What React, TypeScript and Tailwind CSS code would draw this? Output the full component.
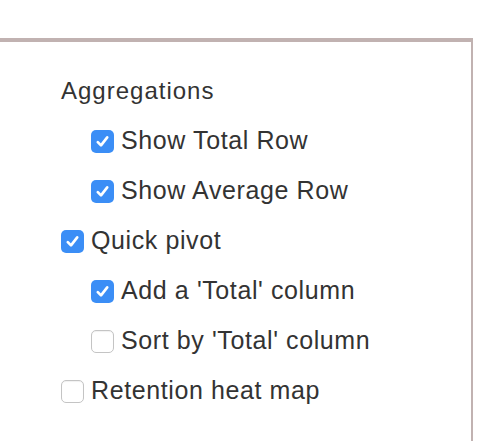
import React from "react";

type Item = { label: string; checked?: boolean; indent?: boolean; header?: boolean };

const items: Item[] = [
  { label: "Aggregations", header: true },
  { label: "Show Total Row", checked: true, indent: true },
  { label: "Show Average Row", checked: true, indent: true },
  { label: "Quick pivot", checked: true },
  { label: "Add a 'Total' column", checked: true, indent: true },
  { label: "Sort by 'Total' column", indent: true },
  { label: "Retention heat map" },
];

function Box({ checked }: { checked?: boolean }) {
  if (checked) {
    return (
      <span className="flex h-[23px] w-[23px] shrink-0 items-center justify-center rounded-[5px] bg-[#3b8ef6]">
        <svg width="15" height="15" viewBox="0 0 14 14" fill="none">
          <path d="M2.6 7.6 L5.6 10.6 L11.4 3.2" stroke="white" strokeWidth="2.5" strokeLinecap="round" strokeLinejoin="round" />
        </svg>
      </span>
    );
  }
  return <span className="h-[23px] w-[23px] shrink-0 rounded-[5px] border border-[#c4c4c4] bg-white shadow-[inset_0_1px_1px_rgba(0,0,0,0.06)]" />;
}

export default function App() {
  return (
    <div className="h-[441px] w-[497px] bg-white font-['Liberation_Sans',Arial,sans-serif] text-[#333]">
      <div className="h-[38px]" />
      <div className="h-[403px] w-[473px] border-t-4 border-r-2 border-[#c1b2b1]">
        <div className="pl-[61px] pt-[24px]">
          {items.map((it) => (
            <div key={it.label} className={`flex h-[50px] items-center ${it.indent ? "pl-[30px]" : ""}`}>
              {it.header ? (
                <span className="text-[24px] tracking-[1px]">{it.label}</span>
              ) : (
                <>
                  <Box checked={it.checked} />
                  <span className="ml-[7px] text-[25px] tracking-[0.6px]">{it.label}</span>
                </>
              )}
            </div>
          ))}
        </div>
      </div>
    </div>
  );
}
